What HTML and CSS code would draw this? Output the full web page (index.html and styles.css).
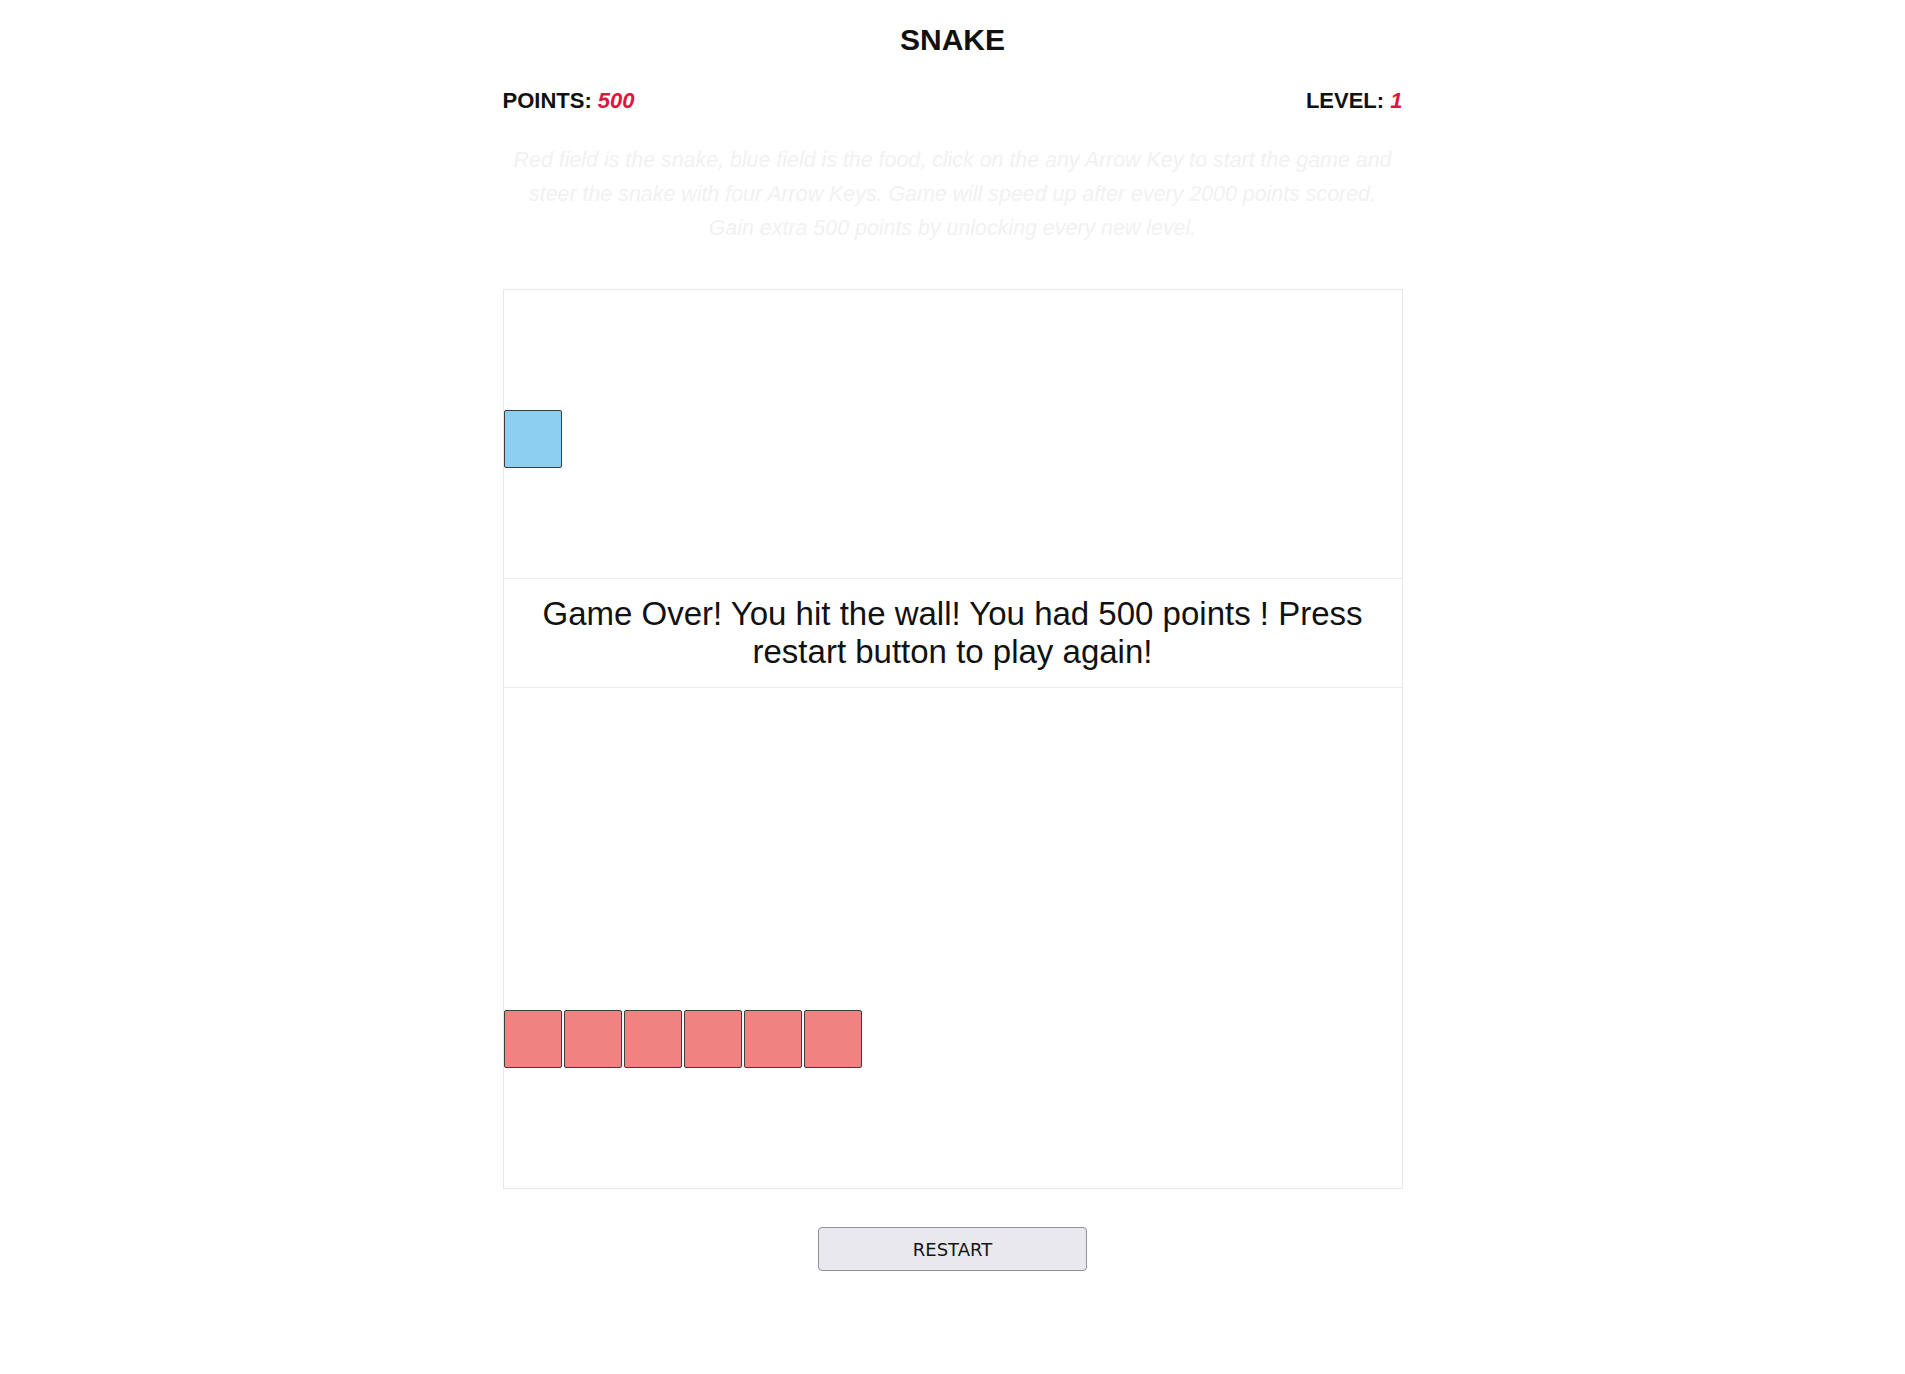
FILE: index.html
```html
<!DOCTYPE html>
<html lang="en">
<head>
<meta charset="utf-8">
<title>Snake</title>
<link rel="stylesheet" href="styles.css">
</head>
<body>
<main class="game">
  <h1 class="title">SNAKE</h1>
  <div class="stats">
    <div class="stat">POINTS: <span class="stat-value">500</span></div>
    <div class="stat">LEVEL: <span class="stat-value">1</span></div>
  </div>
  <p class="help">Red field is the snake, blue field is the food, click on the any Arrow Key to start the game and steer the snake with four Arrow Keys. Game will speed up after every 2000 points scored. Gain extra 500 points by unlocking every new level.</p>
  <div class="board">
    <div class="cell food" style="left:0px;top:120px"></div>
    <div class="cell snake" style="left:0px;top:720px"></div>
    <div class="cell snake" style="left:60px;top:720px"></div>
    <div class="cell snake" style="left:120px;top:720px"></div>
    <div class="cell snake" style="left:180px;top:720px"></div>
    <div class="cell snake" style="left:240px;top:720px"></div>
    <div class="cell snake" style="left:300px;top:720px"></div>
    <div class="message">Game Over! You hit the wall! You had 500 points ! Press restart button to play again!</div>
  </div>
  <div class="actions">
    <button class="restart" type="button">RESTART</button>
  </div>
</main>
</body>
</html>
```

FILE: styles.css
```css
html, body {
  margin: 0;
  padding: 0;
  background: #ffffff;
}

body {
  font-family: "Liberation Sans", Arial, sans-serif;
  color: #111111;
}

.game {
  width: 900px;
  margin: 0 auto;
  display: flex;
  flex-direction: column;
}

.title {
  margin: 23px 0 0 0;
  font-size: 30px;
  line-height: 34px;
  font-weight: 700;
  text-align: center;
  color: #111111;
}

.stats {
  margin-top: 31px;
  display: flex;
  justify-content: space-between;
  font-size: 22px;
  line-height: 26px;
  font-weight: 700;
  color: #111111;
}

.stat-value {
  color: #e0163f;
  font-style: italic;
}

.help {
  margin: 29px 0 0 0;
  padding: 0 8px;
  font-size: 21.4px;
  line-height: 34px;
  font-style: italic;
  text-align: center;
  color: #f1f1f3;
}

.board {
  position: relative;
  margin-top: 44px;
  width: 900px;
  height: 900px;
  box-sizing: border-box;
  border: 1px solid #e8e8e8;
  background: #ffffff;
}

.cell {
  position: absolute;
  width: 58px;
  height: 58px;
  box-sizing: border-box;
  border: 1px solid #3e3e3e;
  border-radius: 2px;
}

.food {
  background: #8ccff1;
}

.snake {
  background: #f08282;
}

.message {
  position: absolute;
  left: 0;
  right: 0;
  top: 288px;
  height: 110px;
  box-sizing: border-box;
  border-top: 1px solid #ebebeb;
  border-bottom: 1px solid #ebebeb;
  background: #ffffff;
  display: flex;
  align-items: center;
  justify-content: center;
  padding: 0 20px;
  font-size: 33px;
  line-height: 38px;
  text-align: center;
  color: #111111;
}

.actions {
  display: flex;
  justify-content: center;
  margin-top: 38px;
}

.restart {
  width: 269px;
  height: 44px;
  box-sizing: border-box;
  border: 1px solid #8f8f9d;
  border-radius: 4px;
  background: #e9e9ed;
  color: #15141a;
  font-family: "DejaVu Sans", Verdana, sans-serif;
  font-size: 18px;
  padding: 0;
}
```
